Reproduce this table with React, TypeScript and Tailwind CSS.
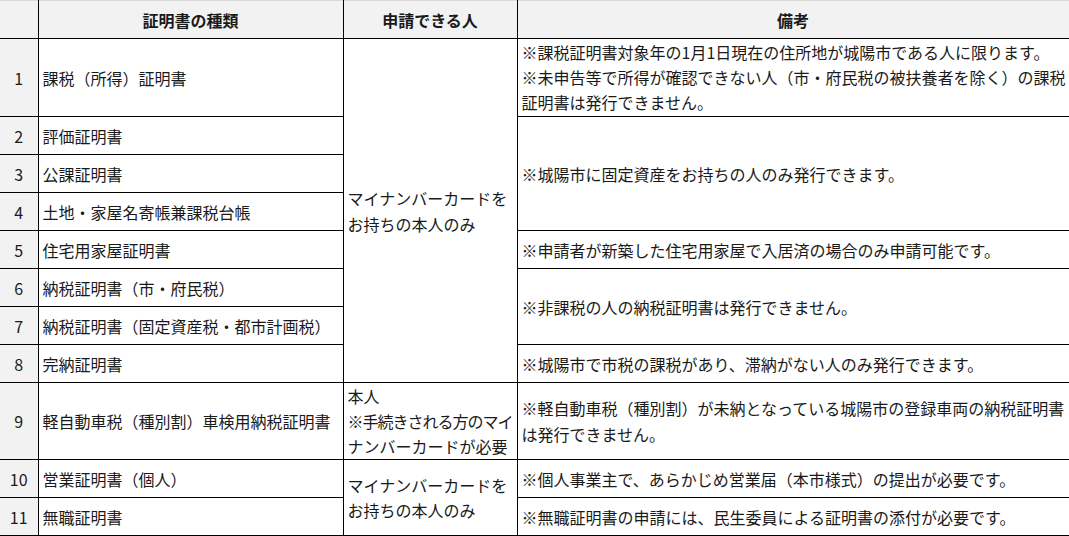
const rowCls = "h-[38px]";
const numCls = "border border-black border-l-0 bg-[#f2f2f2] text-center align-middle p-0";
const cellCls = "border border-black align-middle px-[4px] py-0 whitespace-nowrap";

export default function App() {
  return (
    <div className="w-[1069px] h-[536px] bg-white font-['Noto_Sans_CJK_JP',sans-serif] text-[16px] leading-[26px] text-[#1a1a1a] overflow-hidden">
      <table className="table-fixed border-collapse w-[1069px]">
        <colgroup>
          <col className="w-[38px]" />
          <col className="w-[305px]" />
          <col className="w-[174px]" />
          <col className="w-[552px]" />
        </colgroup>
        <thead>
          <tr className={rowCls}>
            <th className="border-r border-b border-black bg-[#f2f2f2] border-t border-t-[#d9d9d9]"></th>
            <th className="border border-black border-t-[#d9d9d9] bg-[#f2f2f2] font-bold text-center">証明書の種類</th>
            <th className="border border-black border-t-[#d9d9d9] bg-[#f2f2f2] font-bold text-center">申請できる人</th>
            <th className="border border-black border-t-[#d9d9d9] bg-[#f2f2f2] font-bold text-center">備考</th>
          </tr>
        </thead>
        <tbody>
          <tr className="h-[78px]">
            <td className={numCls}>1</td>
            <td className={cellCls}>課税（所得）証明書</td>
            <td className={cellCls} rowSpan={8}>
              マイナンバーカードを
              <br />
              お持ちの本人のみ
            </td>
            <td className={cellCls + " leading-[25px]"}>
              ※課税証明書対象年の1月1日現在の住所地が城陽市である人に限ります。
              <br />
              ※未申告等で所得が確認できない人（市・府民税の被扶養者を除く）の課税
              <br />
              証明書は発行できません。
            </td>
          </tr>
          <tr className={rowCls}>
            <td className={numCls}>2</td>
            <td className={cellCls}>評価証明書</td>
            <td className={cellCls} rowSpan={3}>※城陽市に固定資産をお持ちの人のみ発行できます。</td>
          </tr>
          <tr className={rowCls}>
            <td className={numCls}>3</td>
            <td className={cellCls}>公課証明書</td>
          </tr>
          <tr className={rowCls}>
            <td className={numCls}>4</td>
            <td className={cellCls}>土地・家屋名寄帳兼課税台帳</td>
          </tr>
          <tr className={rowCls}>
            <td className={numCls}>5</td>
            <td className={cellCls}>住宅用家屋証明書</td>
            <td className={cellCls}>※申請者が新築した住宅用家屋で入居済の場合のみ申請可能です。</td>
          </tr>
          <tr className={rowCls}>
            <td className={numCls}>6</td>
            <td className={cellCls}>納税証明書（市・府民税）</td>
            <td className={cellCls} rowSpan={2}>※非課税の人の納税証明書は発行できません。</td>
          </tr>
          <tr className={rowCls}>
            <td className={numCls}>7</td>
            <td className={cellCls}>納税証明書（固定資産税・都市計画税）</td>
          </tr>
          <tr className={rowCls}>
            <td className={numCls}>8</td>
            <td className={cellCls}>完納証明書</td>
            <td className={cellCls}>※城陽市で市税の課税があり、滞納がない人のみ発行できます。</td>
          </tr>
          <tr className="h-[77px]">
            <td className={numCls}>9</td>
            <td className={cellCls}>軽自動車税（種別割）車検用納税証明書</td>
            <td className={cellCls + " leading-[25px]"}>
              本人
              <br />
              <span className="tracking-[-1px]">※手続きされる方のマイ</span>
              <br />
              ナンバーカードが必要
            </td>
            <td className={cellCls}>
              ※軽自動車税（種別割）が未納となっている城陽市の登録車両の納税証明書
              <br />
              は発行できません。
            </td>
          </tr>
          <tr className={rowCls}>
            <td className={numCls}>10</td>
            <td className={cellCls}>営業証明書（個人）</td>
            <td className={cellCls + " leading-[25px]"} rowSpan={2}>
              マイナンバーカードを
              <br />
              お持ちの本人のみ
            </td>
            <td className={cellCls}>※個人事業主で、あらかじめ営業届（本市様式）の提出が必要です。</td>
          </tr>
          <tr className={rowCls}>
            <td className={numCls}>11</td>
            <td className={cellCls}>無職証明書</td>
            <td className={cellCls}>※無職証明書の申請には、民生委員による証明書の添付が必要です。</td>
          </tr>
        </tbody>
      </table>
    </div>
  );
}
